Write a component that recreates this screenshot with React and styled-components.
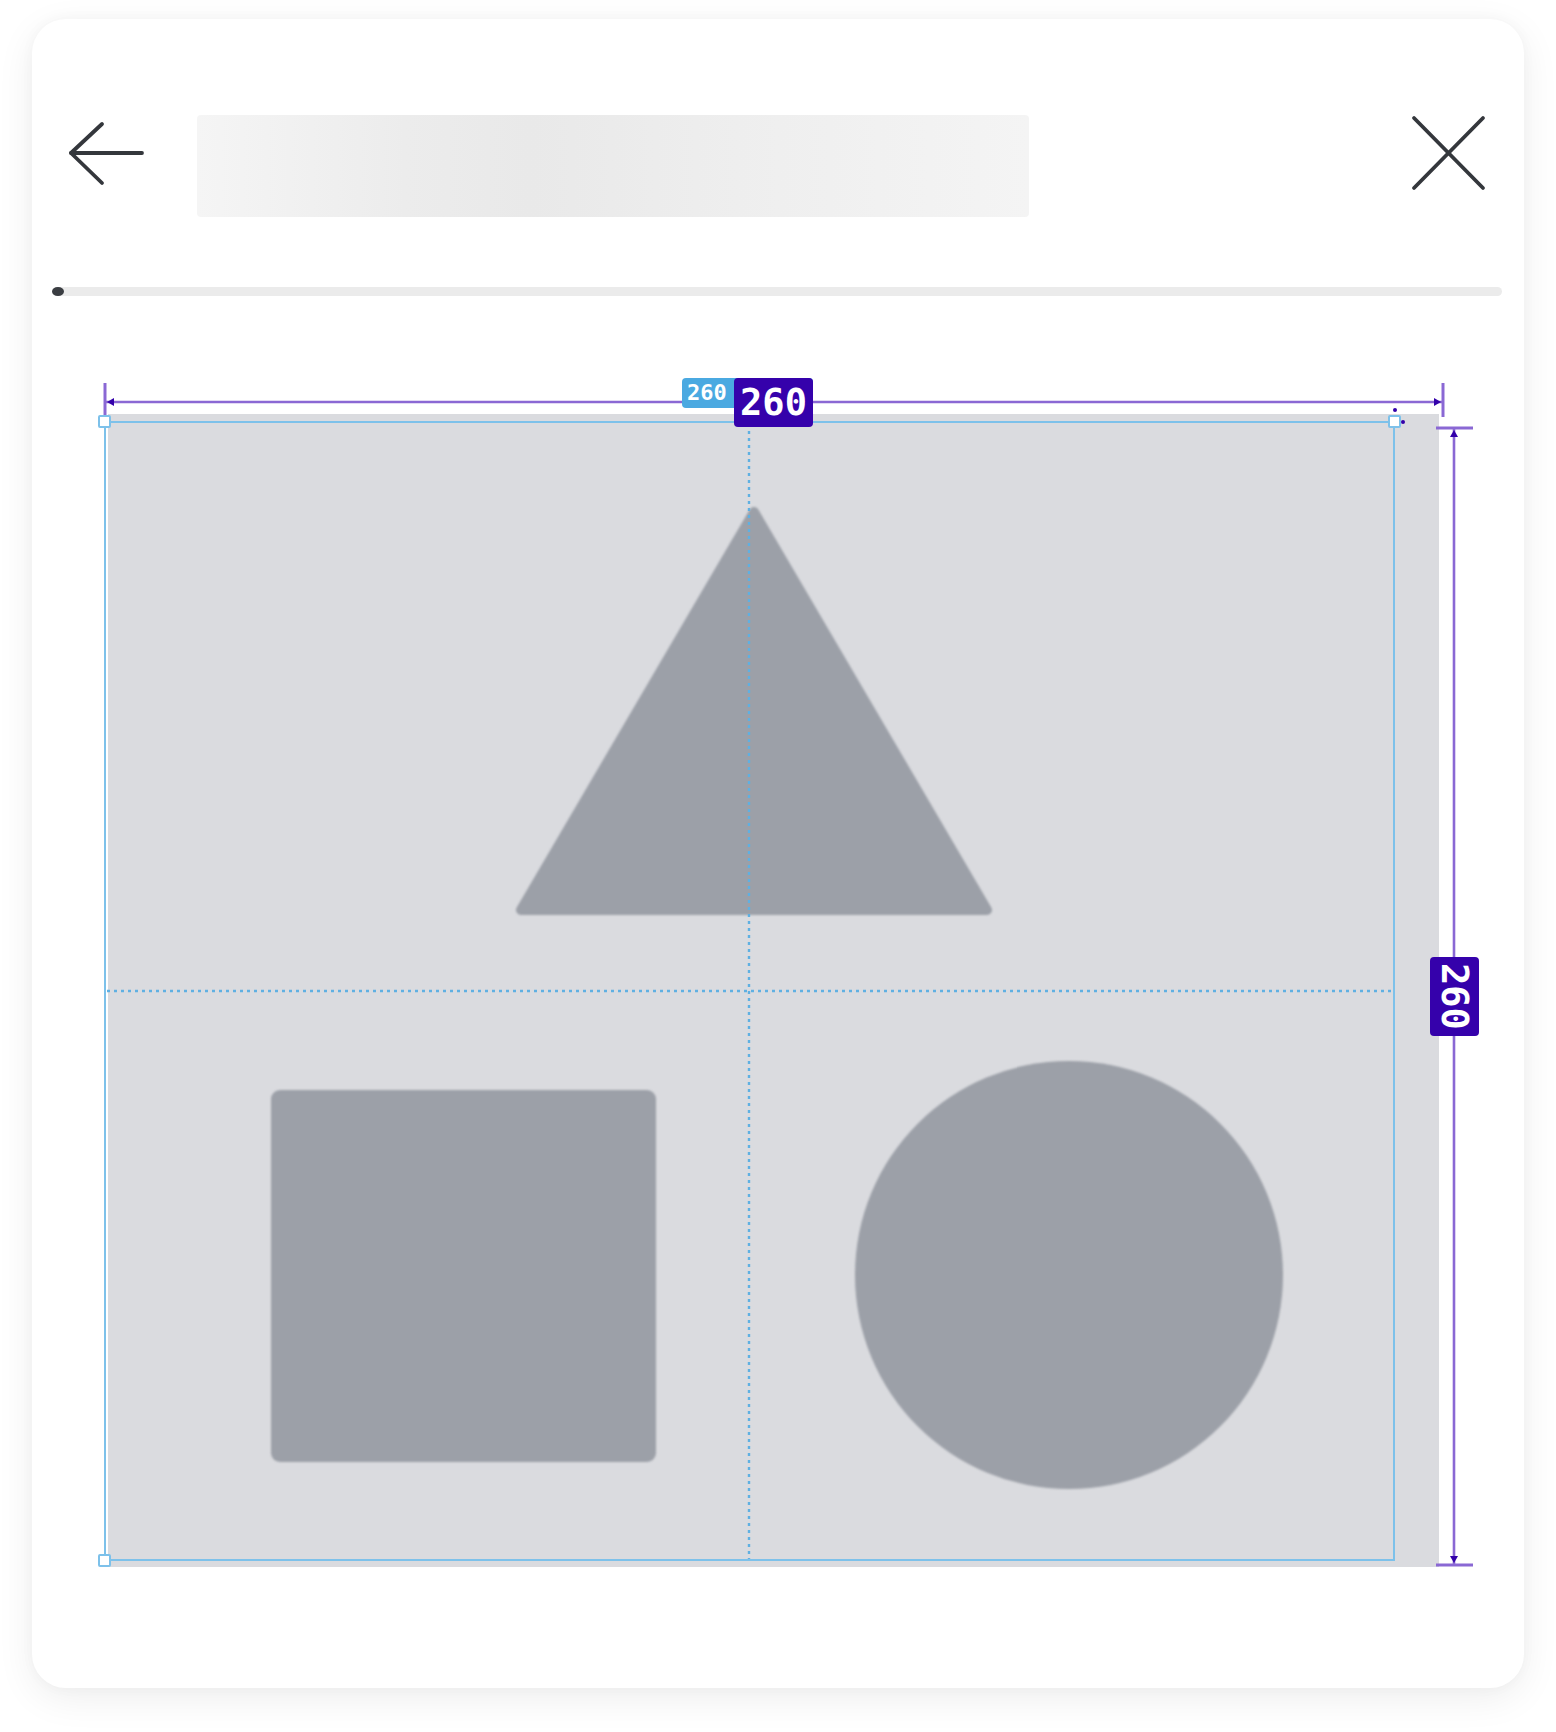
import styled, { createGlobalStyle } from 'styled-components';

const GlobalStyle = createGlobalStyle`
  html, body {
    margin: 0;
    padding: 0;
    background: #ffffff;
    font-family: "Inter", "Liberation Sans", sans-serif;
  }
`;

const Page = styled.div`
  padding: 19px 32px 44px;
`;

const Card = styled.div`
  width: 1492px;
  background: #ffffff;
  border-radius: 34px;
  box-shadow: 0 10px 38px rgba(0, 0, 0, 0.07), 0 0 14px rgba(0, 0, 0, 0.03);
  padding-bottom: 121px;
`;

/**
|--------------------------------------------------
| Header
|--------------------------------------------------
*/

const Header = styled.div`
  display: flex;
  align-items: flex-start;
  padding: 95px 36px 0 34px;
`;

const IconButton = styled.button`
  border: 0;
  padding: 0;
  margin: ${p => p.$top || 0}px 0 0 ${p => (p.$push ? 'auto' : '0')};
  background: none;
  display: block;
  line-height: 0;
  cursor: pointer;
`;

const TitleSkeleton = styled.div`
  margin: 1px 0 0 51px;
  width: 832px;
  height: 102px;
  border-radius: 4px;
  background: linear-gradient(90deg, #f5f5f5 0%, #ececec 25%, #e9e9e9 40%, #efefef 70%, #f4f4f4 100%);
`;

const BackIcon = () => (
  <svg width="80" height="68" viewBox="0 0 80 68" fill="none" stroke="#34373c" strokeWidth="3.8" strokeLinecap="round" strokeLinejoin="round">
    <path d="M5 34 H76" />
    <path d="M36 5 L5 34 L36 64" />
  </svg>
);

const CloseIcon = () => (
  <svg width="78" height="78" viewBox="0 0 78 78" fill="none" stroke="#34373c" strokeWidth="3.8" strokeLinecap="round">
    <path d="M4 4 L73 74" />
    <path d="M73 4 L4 74" />
  </svg>
);

/**
|--------------------------------------------------
| Progress
|--------------------------------------------------
*/

const Track = styled.div`
  margin: 70px 22px 0 20px;
  height: 9px;
  border-radius: 5px;
  background: #ebebeb;
  display: flex;
`;

const Indicator = styled.div`
  width: 12px;
  height: 9px;
  border-radius: 50%;
  background: #3a3d42;
`;

/**
|--------------------------------------------------
| Canvas with measurement overlay
|--------------------------------------------------
*/

const CanvasArea = styled.div`
  margin: 118px 0 0 76px;
`;

const Frame = styled.div`
  position: relative;
  width: 1331px;
  height: 1153px;
  background: #dadbdf;
`;

const Placeholder = styled.svg`
  display: block;
  filter: blur(0.8px);
`;

const Guides = styled.svg`
  position: absolute;
  left: 0;
  top: 0;
  overflow: visible;
  pointer-events: none;
`;

const Selection = styled.div`
  position: absolute;
  left: -4px;
  top: 7px;
  width: 1291px;
  height: 1140px;
  box-sizing: border-box;
  border: 2px solid #7dc1ea;
`;

const corners = {
  tl: 'top: -8px; left: -8px;',
  tr: 'top: -8px; right: -8px;',
  bl: 'bottom: -8px; left: -8px;',
};

const Handle = styled.div`
  position: absolute;
  ${p => corners[p.$corner]}
  width: 13px;
  height: 13px;
  box-sizing: border-box;
  background: #ffffff;
  border: 2px solid #7dc1ea;
  border-radius: 2px;

  ${p => p.$rotate && `
    &::before, &::after {
      content: '';
      position: absolute;
      width: 4px;
      height: 4px;
      border-radius: 50%;
      background: #3300aa;
    }
    &::before { left: 2.5px; top: -9px; }
    &::after { left: 11px; top: 2.5px; }
  `}
`;

const Label = styled.div`
  box-sizing: border-box;
  color: #ffffff;
  font-family: "DejaVu Sans Mono", "Liberation Mono", monospace;
  font-weight: bold;
  border-radius: 4px;
`;

const WidthTag = styled(Label)`
  position: absolute;
  left: 574px;
  top: -36px;
  width: 131px;
  height: 30px;
  padding-left: 5px;
  display: flex;
  align-items: flex-start;
  justify-content: space-between;
  background: #4aa9e1;
  font-size: 22px;
  line-height: 30px;
`;

const SizeLabel = styled(Label)`
  display: flex;
  align-items: center;
  justify-content: center;
  background: #3501ab;
  font-size: 37px;
  line-height: 1;
  width: ${p => (p.$vertical ? 49 : 79)}px;
  height: ${p => (p.$vertical ? 79 : 49)}px;
  writing-mode: ${p => (p.$vertical ? 'vertical-rl' : 'horizontal-tb')};
`;

const HeightRail = styled.div`
  position: absolute;
  left: 1328px;
  top: 14px;
  width: 37px;
  height: 1137px;
  display: flex;
  align-items: center;
  justify-content: center;
`;

const shape = '#9ca0a8';

const Shapes = () => (
  <Placeholder width="1331" height="1153" viewBox="0 0 1331 1153">
    <polygon
      points="646,98 413,496 879,496"
      fill={shape}
      stroke={shape}
      strokeWidth="10"
      strokeLinejoin="round"
    />
    <rect x="163" y="676" width="385" height="372" rx="9" fill={shape} />
    <circle cx="961" cy="861" r="214" fill={shape} />
  </Placeholder>
);

const purple = '#8a68d4';
const ink = '#3300aa';
const cyan = '#5fb0e2';

const Measures = () => (
  <Guides width="1331" height="1153">
    <line x1="641" y1="10" x2="641" y2="1145" stroke={cyan} strokeWidth="2.4" strokeDasharray="3 4" />
    <line x1="-1" y1="577" x2="1285" y2="577" stroke={cyan} strokeWidth="2.4" strokeDasharray="3 4" />

    <line x1="-3" y1="-12" x2="1335" y2="-12" stroke={purple} strokeWidth="2.6" />
    <line x1="-3" y1="-31" x2="-3" y2="3" stroke={purple} strokeWidth="3" />
    <line x1="1335" y1="-31" x2="1335" y2="3" stroke={purple} strokeWidth="3" />
    <polygon points="-1,-12 6,-16 6,-8" fill={ink} />
    <polygon points="1333,-12 1326,-16 1326,-8" fill={ink} />

    <line x1="1346" y1="14" x2="1346" y2="1151" stroke={purple} strokeWidth="2.6" />
    <line x1="1328" y1="14" x2="1365" y2="14" stroke={purple} strokeWidth="3" />
    <line x1="1328" y1="1151" x2="1365" y2="1151" stroke={purple} strokeWidth="3" />
    <polygon points="1346,16 1342,23 1350,23" fill={ink} />
    <polygon points="1346,1149 1342,1142 1350,1142" fill={ink} />
  </Guides>
);

export default function App() {
  return (
    <>
      <GlobalStyle />
      <Page>
        <Card>
          <Header>
            <IconButton $top={5} aria-label="back">
              <BackIcon />
            </IconButton>
            <TitleSkeleton />
            <IconButton $push aria-label="close">
              <CloseIcon />
            </IconButton>
          </Header>

          <Track>
            <Indicator />
          </Track>

          <CanvasArea>
            <Frame>
              <Shapes />
              <Measures />
              <Selection>
                <Handle $corner="tl" />
                <Handle $corner="tr" $rotate />
                <Handle $corner="bl" />
              </Selection>
              <WidthTag>
                <span>260</span>
                <SizeLabel>260</SizeLabel>
              </WidthTag>
              <HeightRail>
                <SizeLabel $vertical>260</SizeLabel>
              </HeightRail>
            </Frame>
          </CanvasArea>
        </Card>
      </Page>
    </>
  );
}
